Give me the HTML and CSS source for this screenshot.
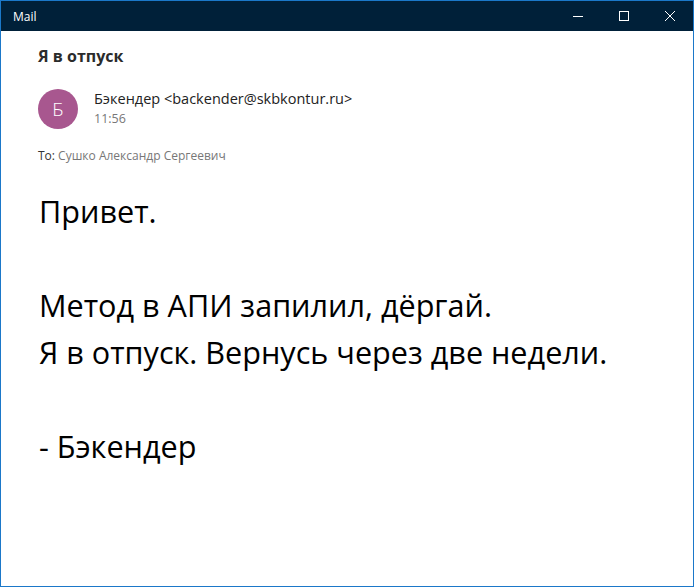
FILE: index.html
```html
<!DOCTYPE html>
<html lang="ru">
<head>
<meta charset="utf-8">
<title>Mail</title>
<link rel="stylesheet" href="styles.css">
</head>
<body>
<div class="window">
  <div class="titlebar">
    <span class="app-title">Mail</span>
    <div class="controls">
      <span class="ctl">
        <svg width="10" height="10" viewBox="0 0 10 10"><path d="M0 5.5H10" stroke="#fff" stroke-width="1"/></svg>
      </span>
      <span class="ctl">
        <svg width="10" height="10" viewBox="0 0 10 10"><rect x="0.5" y="0.5" width="9" height="9" fill="none" stroke="#fff" stroke-width="1"/></svg>
      </span>
      <span class="ctl">
        <svg width="10" height="10" viewBox="0 0 10 10"><path d="M0 0L10 10M10 0L0 10" stroke="#fff" stroke-width="1"/></svg>
      </span>
    </div>
  </div>
  <div class="content">
    <h1 class="subject">Я в отпуск</h1>
    <div class="sender">
      <div class="avatar">Б</div>
      <div class="sender-info">
        <div class="sender-name">Бэкендер &lt;backender@skbkontur.ru&gt;</div>
        <div class="time">11:56</div>
      </div>
    </div>
    <div class="to"><span class="to-label">To:</span> Сушко Александр Сергеевич</div>
    <div class="body">
      <p>Привет.</p>
      <p class="blank">&nbsp;</p>
      <p>Метод в АПИ запилил, дёргай.</p>
      <p>Я в отпуск. Вернусь через две недели.</p>
      <p class="blank">&nbsp;</p>
      <p>- Бэкендер</p>
    </div>
  </div>
</div>
</body>
</html>
```
FILE: styles.css
```css
html, body {
  margin: 0;
  padding: 0;
  background: #ffffff;
}
body {
  font-family: "Open Sans", "Noto Sans", sans-serif;
}
.window {
  box-sizing: border-box;
  width: 694px;
  height: 587px;
  border: 1px solid #1b78c9;
  background: #fff;
  display: flex;
  flex-direction: column;
}
.titlebar {
  height: 30px;
  background: #002039;
  display: flex;
  align-items: center;
  justify-content: space-between;
  flex-shrink: 0;
}
.app-title {
  color: #fff;
  font-size: 12px;
  margin-left: 12px;
  font-family: "Open Sans", sans-serif;
}
.controls {
  display: flex;
  height: 100%;
}
.ctl {
  width: 46px;
  height: 100%;
  display: flex;
  align-items: center;
  justify-content: center;
}
.ctl svg { display: block; }
.content {
  padding: 13px 0 0 37px;
}
.subject {
  margin: 0;
  font-size: 16px;
  font-weight: 700;
  color: #2b2b2b;
  line-height: 24px;
}
.sender {
  display: flex;
  align-items: center;
  margin-top: 21px;
}
.avatar {
  width: 40px;
  height: 40px;
  border-radius: 50%;
  background: #a8578f;
  color: #fff;
  font-size: 19px;
  font-weight: 300;
  display: flex;
  align-items: center;
  justify-content: center;
  flex-shrink: 0;
}
.sender-info {
  margin-left: 16px;
}
.sender-name {
  font-size: 14.5px;
  color: #222;
  line-height: 20px;
}
.time {
  font-size: 12.5px;
  color: #777;
  line-height: 20px;
}
.to {
  margin-top: 19px;
  font-size: 12px;
  color: #777;
  line-height: 16px;
}
.to-label { color: #333; }
.body {
  margin-top: 24px;
  margin-left: 1px;
  color: #000;
  font-size: 30.6px;
  line-height: 47px;
}
.body p {
  margin: 0;
}
```
